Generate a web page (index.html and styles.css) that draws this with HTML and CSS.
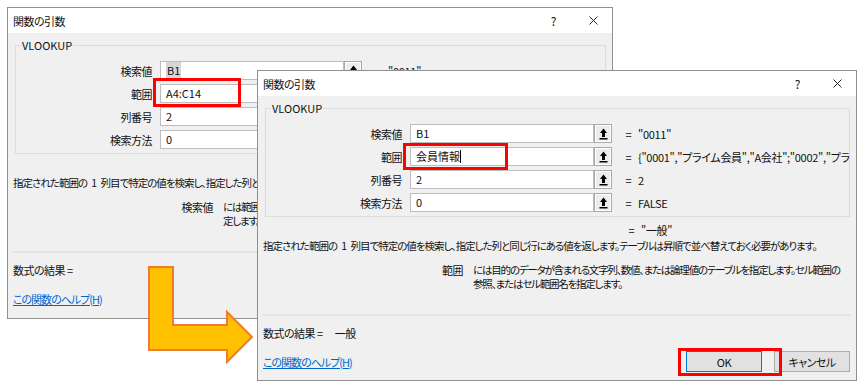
FILE: index.html
```html
<!DOCTYPE html>
<html lang="ja">
<head>
  <meta charset="UTF-8">
  <title>関数の引数</title>
  <link rel="stylesheet" href="styles.css">
</head>
<body>
  <div class="dlg dlg-back">
    <div class="titlebar">
      <span class="title">関数の引数</span>
      <span class="help">?</span>
      <svg class="close" width="9" height="9" viewBox="0 0 9 9"><path d="M0.5 0.5 L8.5 8.5 M8.5 0.5 L0.5 8.5" stroke="#222" stroke-width="1"/></svg>
    </div>
    <div class="content">
      <div class="group">
        <span class="legend">VLOOKUP</span>
        <div class="row">
          <span class="lbl">検索値</span>
          <div class="field"><span class="sel">B1</span></div>
          <span class="ref"><svg width="9" height="12" viewBox="0 0 9 12"><path d="M4.5 0.5 L8 5 H6 V9 H3 V5 H1 Z" fill="#000"/><rect x="0.5" y="10" width="8" height="1.5" fill="#000"/></svg></span>
          <span class="eq">=</span>
          <span class="val">"0011"</span>
        </div>
        <div class="row">
          <span class="lbl">範囲</span>
          <div class="field">A4:C14</div>
          <span class="ref"><svg width="9" height="12" viewBox="0 0 9 12"><path d="M4.5 0.5 L8 5 H6 V9 H3 V5 H1 Z" fill="#000"/><rect x="0.5" y="10" width="8" height="1.5" fill="#000"/></svg></span>
          <span class="eq">=</span>
          <span class="val">{"0001","プライム会員","A会社";"0002","プライム会員","B会社"}</span>
        </div>
        <div class="row">
          <span class="lbl">列番号</span>
          <div class="field">2</div>
          <span class="ref"><svg width="9" height="12" viewBox="0 0 9 12"><path d="M4.5 0.5 L8 5 H6 V9 H3 V5 H1 Z" fill="#000"/><rect x="0.5" y="10" width="8" height="1.5" fill="#000"/></svg></span>
          <span class="eq">=</span>
          <span class="val">2</span>
        </div>
        <div class="row">
          <span class="lbl">検索方法</span>
          <div class="field">0</div>
          <span class="ref"><svg width="9" height="12" viewBox="0 0 9 12"><path d="M4.5 0.5 L8 5 H6 V9 H3 V5 H1 Z" fill="#000"/><rect x="0.5" y="10" width="8" height="1.5" fill="#000"/></svg></span>
          <span class="eq">=</span>
          <span class="val">FALSE</span>
        </div>
      </div>
      <div class="result-line"></div>
      <p class="desc">指定された範囲の 1 列目で特定の値を検索し、指定した列と同じ行にある値を返します。テーブルは昇順で並べ替えておく必要があります。</p>
      <div class="arg">
        <span class="arg-name">検索値</span>
        <span class="arg-text">には範囲の先頭列で検索する値を指定します。値、参照、または文字列を指<br>定します。</span>
      </div>
      <div class="sep"></div>
      <div class="formula">数式の結果 =</div>
      <div class="bottom">
        <a class="help-link" href="#">この関数のヘルプ(H)</a>
        <button class="btn btn-ok">OK</button>
        <button class="btn">キャンセル</button>
      </div>
    </div>
  </div>

  <div class="mark mark-back"></div>

  <svg class="arrow" width="106" height="98" viewBox="0 0 106 98">
    <polygon points="1,1 25,1 25,59 79,59 79,46 104,71 79,96 79,84 1,84" fill="#ffc000" stroke="#ed7d31" stroke-width="2" stroke-linejoin="miter"/>
  </svg>

  <div class="dlg dlg-front">
    <div class="titlebar">
      <span class="title">関数の引数</span>
      <span class="help">?</span>
      <svg class="close" width="9" height="9" viewBox="0 0 9 9"><path d="M0.5 0.5 L8.5 8.5 M8.5 0.5 L0.5 8.5" stroke="#222" stroke-width="1"/></svg>
    </div>
    <div class="content">
      <div class="group">
        <span class="legend">VLOOKUP</span>
        <div class="row">
          <span class="lbl">検索値</span>
          <div class="field">B1</div>
          <span class="ref"><svg width="9" height="12" viewBox="0 0 9 12"><path d="M4.5 0.5 L8 5 H6 V9 H3 V5 H1 Z" fill="#000"/><rect x="0.5" y="10" width="8" height="1.5" fill="#000"/></svg></span>
          <span class="eq">=</span>
          <span class="val">"0011"</span>
        </div>
        <div class="row">
          <span class="lbl">範囲</span>
          <div class="field">会員情報<span class="caret"></span></div>
          <span class="ref"><svg width="9" height="12" viewBox="0 0 9 12"><path d="M4.5 0.5 L8 5 H6 V9 H3 V5 H1 Z" fill="#000"/><rect x="0.5" y="10" width="8" height="1.5" fill="#000"/></svg></span>
          <span class="eq">=</span>
          <span class="val">{"0001","プライム会員","A会社";"0002","プライム会員","B会社"}</span>
        </div>
        <div class="row">
          <span class="lbl">列番号</span>
          <div class="field">2</div>
          <span class="ref"><svg width="9" height="12" viewBox="0 0 9 12"><path d="M4.5 0.5 L8 5 H6 V9 H3 V5 H1 Z" fill="#000"/><rect x="0.5" y="10" width="8" height="1.5" fill="#000"/></svg></span>
          <span class="eq">=</span>
          <span class="val">2</span>
        </div>
        <div class="row">
          <span class="lbl">検索方法</span>
          <div class="field">0</div>
          <span class="ref"><svg width="9" height="12" viewBox="0 0 9 12"><path d="M4.5 0.5 L8 5 H6 V9 H3 V5 H1 Z" fill="#000"/><rect x="0.5" y="10" width="8" height="1.5" fill="#000"/></svg></span>
          <span class="eq">=</span>
          <span class="val">FALSE</span>
        </div>
      </div>
      <div class="result-line"><span class="eq">=</span><span class="val">"一般"</span></div>
      <p class="desc">指定された範囲の 1 列目で特定の値を検索し、指定した列と同じ行にある値を返します。テーブルは昇順で並べ替えておく必要があります。</p>
      <div class="arg">
        <span class="arg-name">範囲</span>
        <span class="arg-text">には目的のデータが含まれる文字列、数値、または論理値のテーブルを指定します。セル範囲の<br>参照、またはセル範囲名を指定します。</span>
      </div>
      <div class="sep"></div>
      <div class="formula">数式の結果 =<span class="formula-val">一般</span></div>
      <div class="bottom">
        <a class="help-link" href="#">この関数のヘルプ(H)</a>
        <button class="btn btn-ok">OK</button>
        <button class="btn">キャンセル</button>
      </div>
    </div>
  </div>

  <div class="mark mark-range"></div>
  <div class="mark mark-ok"></div>
</body>
</html>
```

FILE: styles.css
```css
html, body {
  margin: 0;
  padding: 0;
}

body {
  position: relative;
  width: 866px;
  height: 387px;
  overflow: hidden;
  background: #fff;
  font-family: "Noto Sans CJK JP", sans-serif;
  font-size: 11px;
  font-feature-settings: "palt";
  letter-spacing: -1px;
  color: #111;
}

/* dialog windows */
.dlg {
  position: absolute;
  box-sizing: border-box;
  border: 1px solid #8f8f8f;
  background: #f0f0f0;
  overflow: hidden;
}

.dlg-back {
  left: 7px;
  top: 7px;
  width: 606px;
  height: 312px;
}

.dlg-front {
  left: 257px;
  top: 70px;
  width: 600px;
  height: 311px;
}

.titlebar {
  display: flex;
  align-items: center;
  height: 25px;
  background: #fff;
  padding-left: 5px;
}

.title {
  flex: 1;
  letter-spacing: -0.5px;
}

.help {
  width: 10px;
  text-align: center;
  margin-right: 31px;
  font-size: 12px;
}

.close {
  margin-right: 14px;
}

.content {
  padding: 12px 6px 0 5px;
}

/* argument group */
.group {
  position: relative;
  margin-left: 2px;
  border: 1px solid #dcdcdc;
  padding: 15px 0 4px 0;
}

.legend {
  position: absolute;
  left: 5px;
  top: -9px;
  padding: 0 1px;
  background: #f0f0f0;
  line-height: 16px;
  letter-spacing: 0;
}

.row {
  display: flex;
  align-items: center;
  height: 19px;
  margin-bottom: 4px;
}

.row:last-child {
  margin-bottom: 0;
}

.lbl {
  width: 136px;
  margin-right: 8px;
  text-align: right;
  letter-spacing: -0.5px;
}

.field {
  box-sizing: border-box;
  width: 184px;
  height: 19px;
  border: 1px solid #bdbdbd;
  background: #fff;
  padding: 0 5px;
  line-height: 17px;
  white-space: nowrap;
  letter-spacing: 0;
}

.sel {
  background: #d6d6d6;
  padding: 0 1px;
}

.caret {
  display: inline-block;
  width: 1px;
  height: 13px;
  background: #000;
  vertical-align: -2px;
}

.ref {
  box-sizing: border-box;
  display: flex;
  align-items: center;
  justify-content: center;
  width: 18px;
  height: 19px;
  border: 1px solid #a9a9a9;
  background: #ececec;
  box-shadow: inset 0 0 0 1px #fff;
}

.eq {
  margin-left: 12px;
  width: 8px;
  text-align: center;
}

.val {
  flex: 1;
  min-width: 0;
  margin-left: 6px;
  white-space: nowrap;
  overflow: hidden;
  letter-spacing: -0.3px;
}

/* text below the group */
.result-line {
  display: flex;
  height: 14px;
  line-height: 14px;
  margin-top: 6px;
  padding-left: 352px;
}

.desc {
  margin: 2px 0 0 0;
  line-height: 14px;
  white-space: nowrap;
  font-size: 10.5px;
  word-spacing: 3px;
}

.arg {
  display: flex;
  margin-top: 10px;
  line-height: 14px;
  white-space: nowrap;
}

.arg-name {
  width: 200px;
  text-align: right;
  margin-right: 10px;
  letter-spacing: -0.5px;
}

.arg-text {
  font-size: 10.5px;
  letter-spacing: -1.2px;
}

.sep {
  height: 2px;
  margin-top: 23px;
  background: #e4e4e4;
}

.formula {
  margin-top: 10px;
  line-height: 14px;
  letter-spacing: -0.5px;
}

.formula-val {
  margin-left: 12px;
}

.bottom {
  display: flex;
  align-items: center;
  margin-top: 11px;
}

.help-link {
  flex: 1;
  color: #0066cc;
  text-decoration: underline;
}

.btn {
  box-sizing: border-box;
  width: 76px;
  height: 21px;
  margin-left: 12px;
  padding: 0;
  border: 1px solid #adadad;
  background: #e1e1e1;
  font-family: inherit;
  font-size: 11px;
  font-feature-settings: "palt";
  letter-spacing: -0.5px;
  color: #111;
}

.btn-ok {
  border-color: #0078d7;
}

/* red highlight frames and the arrow lie over the windows */
.mark {
  position: absolute;
  box-sizing: border-box;
  border: 3px solid #f00;
}

.mark-back {
  left: 153px;
  top: 78px;
  width: 88px;
  height: 29px;
}

.mark-range {
  left: 403px;
  top: 143px;
  width: 105px;
  height: 27px;
}

.mark-ok {
  left: 678px;
  top: 348px;
  width: 104px;
  height: 28px;
}

.arrow {
  position: absolute;
  left: 148px;
  top: 266px;
}
```
